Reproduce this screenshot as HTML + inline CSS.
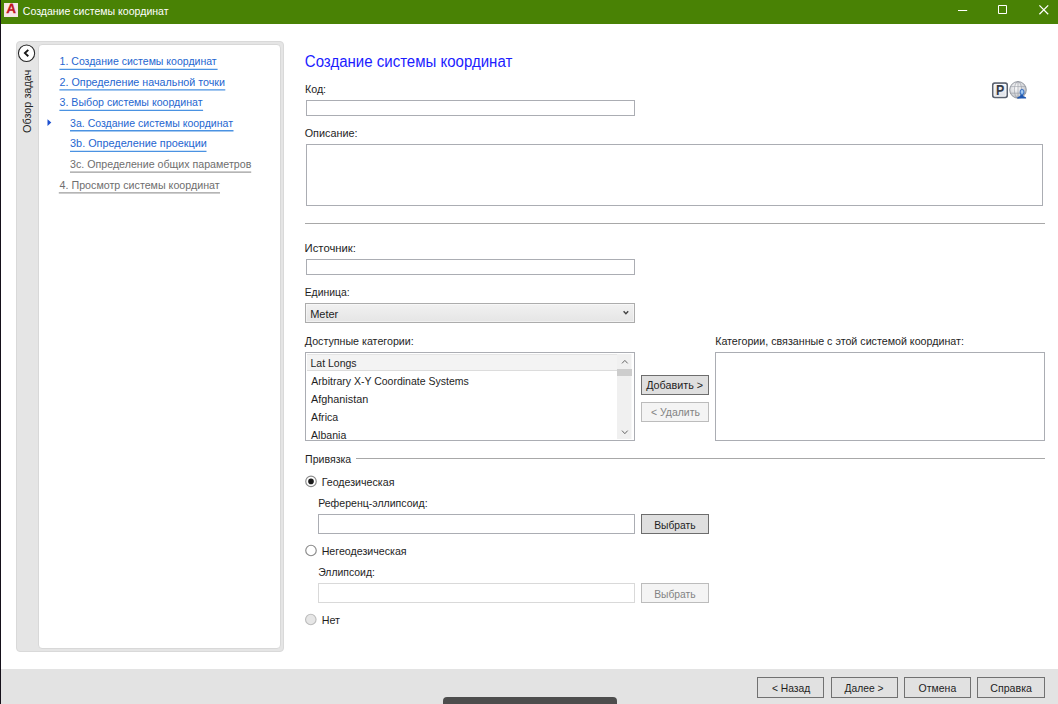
<!DOCTYPE html>
<html lang="ru"><head><meta charset="utf-8"><title>Создание системы координат</title>
<style>
html,body{margin:0;padding:0}
body{width:1058px;height:704px;overflow:hidden;background:#fff;position:relative;font-family:"Liberation Sans",sans-serif;font-size:11.5px;line-height:16px;color:#1e1e1e}
div,span,svg{position:absolute;box-sizing:border-box}
.t{white-space:pre;transform-origin:0 0;display:block}
.tb{left:0;top:0;width:1058px;height:24px;background:#498205}
.lb{left:0;top:0;width:1px;height:704px;background:#15101a}
.ft{left:1px;top:669px;width:1057px;height:35px;background:#e3e3e3}
.in{background:#fff;border:1px solid #abadb3}
.dis{border-color:#d9d9d9}
.btn{background:#e1e1e1;border:1px solid #adadad}
.btn.df{border-color:#6d6d6d;background:#dfdfdf}
.btn.off{background:#f4f4f4;border-color:#bcbcbc}
.ln{height:1px;background:#a8a8a8}
.rd{width:11px;height:11px;border-radius:50%;border:1px solid #8e8e8e;background:#fff}
.ub{stroke:#4a92e2;stroke-width:1.4}
.ug{stroke:#9c9c9c;stroke-width:1.25}
</style></head><body>
<div class="tb"></div><div class="lb"></div>
<div style="left:4px;top:3px;width:14px;height:14px;background:#f6e6e6"></div>
<span class="t" style="left:6.9px;top:1px;font-weight:bold;font-size:13.4px;color:#c0151f;-webkit-text-stroke:.3px #c0151f;transform:skewX(-3deg) scaleX(1.0)">A</span>
<svg style="left:950px;top:0" width="108" height="24" viewBox="0 0 108 24" fill="none" stroke="#fff" stroke-width="1">
<path d="M8 10.5h9.2M48.5 5.5h8v8h-8z"/><path d="M89.4 5.4l8.8 8.8M98.2 5.4l-8.8 8.8" stroke-width="1.25"/></svg>

<div style="left:16px;top:41px;width:268px;height:611px;background:#e5e5e5;border:1px solid #d9d9d9;border-radius:4px"></div>
<div style="left:38px;top:44px;width:243px;height:605px;background:#fff;border:1px solid #d8d8d8;border-radius:4px"></div>
<svg style="left:16px;top:42px" width="22" height="22" viewBox="0 0 22 22" fill="none" stroke="#161616"><ellipse cx="10.550" cy="11.200" rx="8.100" ry="8.300" fill="#fff" stroke-width="1.050" stroke="#262626"/><path d="M12.300 7.900L8.900 11.100l3.400 3.200" stroke-width="1.900"/></svg>
<span class="t" style="left:18.8px;top:132.54px;transform:rotate(-90deg) scaleX(0.9446);color:#222">Обзор задач</span>
<svg style="left:0;top:0" width="300" height="210"><line x1="59.4" x2="217.6" y1="69.4" y2="69.4" class="ub"/><line x1="59.4" x2="225.3" y1="89.9" y2="89.9" class="ub"/><line x1="59.4" x2="203.1" y1="110.4" y2="110.4" class="ub"/><line x1="70.0" x2="233.5" y1="130.8" y2="130.8" class="ub"/><line x1="70.0" x2="206.5" y1="151.4" y2="151.4" class="ub"/><line x1="70.0" x2="251.2" y1="172.0" y2="172.0" class="ug"/><line x1="58.8" x2="220" y1="192.9" y2="192.9" class="ug"/><path d="M47.5 119.3l3.8 3.3l-3.8 3.3z" fill="#1c4fd0"/></svg>

<div class="in" style="left:306px;top:100px;width:329px;height:16px"></div>
<div class="in" style="left:306px;top:144px;width:737px;height:62px"></div>
<div class="ln" style="left:305px;top:223px;width:740px"></div>
<div class="in" style="left:306px;top:259px;width:329px;height:16px"></div>
<div style="left:305px;top:303px;width:330px;height:20px;border:1px solid #acacac;background:linear-gradient(#f1f1f1,#e5e5e5);box-shadow:inset 0 0 0 1px rgba(255,255,255,.45)"></div>
<svg style="left:620px;top:308px" width="12" height="10" fill="none" stroke="#444" stroke-width="1.4"><path d="M3.6 3.2l2.3 2.6l2.3-2.6"/></svg>
<div class="in" style="left:305px;top:352px;width:330px;height:89px"></div>
<div style="left:307px;top:354px;width:310px;height:17px;background:#f3f3f3;border-top:1px solid #e4e4e4;border-bottom:1px solid #dcdcdc"></div>
<div style="left:617px;top:354px;width:15px;height:85px;background:#f0f0f0;border-right:1px solid #f8f8f8"></div>
<div style="left:617px;top:369px;width:15px;height:7px;background:#cdcdcd"></div>
<svg style="left:617px;top:354px" width="16" height="85" fill="none" stroke="#666" stroke-width="1"><path d="M5 9.4l2.85-3l2.85 3M5 76.6l2.85 3.100l2.85-3.100"/></svg>
<div class="btn df" style="left:641px;top:375px;width:68px;height:20px"></div>
<div class="btn off" style="left:641px;top:402px;width:68px;height:20px"></div>
<div class="in" style="left:715px;top:352px;width:330px;height:89px"></div>
<div class="ln" style="left:356px;top:458px;width:689px"></div>

<div class="in" style="left:318px;top:514px;width:317px;height:20px"></div>
<div class="btn df" style="left:641px;top:514px;width:68px;height:20px"></div>
<div class="in dis" style="left:318px;top:583px;width:317px;height:20px"></div>
<div class="btn off" style="left:641px;top:583px;width:68px;height:20px"></div>
<svg style="left:300px;top:470px" width="24" height="160"><g fill="#fff" stroke="#8a8a8a" stroke-width="1.15"><circle cx="11" cy="11.4" r="5.25"/><circle cx="11" cy="80.5" r="5.25"/><circle cx="10.8" cy="149.5" r="5.25" fill="#e6e6e6" stroke="#bdbdbd"/></g><circle cx="11" cy="11.4" r="2.8" fill="#1a1a1a"/></svg>

<svg style="left:990px;top:80px" width="40" height="22" viewBox="0 0 40 22">
<defs><linearGradient id="pg" x1="0" y1="0" x2="0" y2="1"><stop offset="0" stop-color="#f7f8fa"/><stop offset="1" stop-color="#dcdfe6"/></linearGradient>
<radialGradient id="gg" cx=".4" cy=".35" r=".75"><stop offset="0" stop-color="#fbfbfc"/><stop offset=".6" stop-color="#d4d6da"/><stop offset="1" stop-color="#a9acb3"/></radialGradient>
<radialGradient id="hg" cx=".5" cy=".45" r=".6"><stop offset="0" stop-color="#c4dffa"/><stop offset=".55" stop-color="#7db0ea"/><stop offset="1" stop-color="#2f6cc4"/></radialGradient></defs>
<rect x="2.800" y="3.050" width="14.400" height="14.400" rx="1.900" fill="url(#pg)" stroke="#5a616e" stroke-width="1.650"/>
<rect x="4.1" y="4.3" width="11.8" height="11.8" rx="1" fill="none" stroke="#fff" stroke-width=".8" opacity=".8"/>
<text transform="translate(10.2 15.3) scale(.9 1)" text-anchor="middle" font-family="Liberation Sans,sans-serif" font-weight="bold" font-size="13.8" fill="#353b47">P</text>
<circle cx="28" cy="9.9" r="8.3" fill="url(#gg)" stroke="#8f939b" stroke-width=".9"/>
<g fill="none" stroke="#858a93" stroke-width=".65" opacity=".75"><ellipse cx="28" cy="9.9" rx="3.6" ry="8.3"/><path d="M28 1.6v16.6M20.4 6.6h15.2M20.4 13.2h15.2"/></g>
<path d="M27.300 18.550h8.800v-.7c0-.9-1.300-1.200-2.700-1.650l-.55-1.500h-2.300l-.55 1.500c-1.400.45-2.700.75-2.700 1.650z" fill="#1f57b0"/>
<ellipse cx="32.050" cy="12.100" rx="2.050" ry="2.900" fill="url(#hg)" stroke="#2a62b8" stroke-width=".7"/>
</svg>
<div class="ft"></div>
<div class="btn" style="left:757px;top:677px;width:67px;height:21px;border-color:#717171"></div>
<div class="btn" style="left:831px;top:677px;width:67px;height:21px;border-color:#717171"></div>
<div class="btn" style="left:904px;top:677px;width:67px;height:21px;border-color:#717171"></div>
<div class="btn" style="left:977px;top:677px;width:68px;height:21px;border-color:#717171"></div>
<div style="left:443px;top:697px;width:174px;height:12px;background:#4d4d4d;border-radius:4px"></div>
<span class="t tt" style="left:22px;top:3px;transform:translate(0.78px,0.00px) scaleX(0.9177);color:#fff">Создание системы координат</span>
<span class="t lk" style="left:59px;top:53px;transform:translate(0.58px,0.00px) scaleX(0.9152);color:#2566d0">1. Создание системы координат</span>
<span class="t lk" style="left:59px;top:74px;transform:translate(0.57px,0.00px) scaleX(0.9330);color:#2566d0">2. Определение начальной точки</span>
<span class="t lk" style="left:59px;top:94px;transform:translate(0.58px,0.00px) scaleX(0.9221);color:#2566d0">3. Выбор системы координат</span>
<span class="t lk" style="left:70px;top:115px;transform:translate(0.09px,0.00px) scaleX(0.9147);color:#2566d0">3a. Создание системы координат</span>
<span class="t lk" style="left:70px;top:135px;transform:translate(0.06px,0.00px) scaleX(0.9434);color:#2566d0">3b. Определение проекции</span>
<span class="t lg" style="left:70px;top:156px;transform:translate(0.07px,0.00px) scaleX(0.9258);color:#6e6e6e">3c. Определение общих параметров</span>
<span class="t lg" style="left:59px;top:177px;transform:translate(0.60px,0.00px) scaleX(0.9291);color:#6e6e6e">4. Просмотр системы координат</span>
<span class="t h" style="left:304px;top:52px;transform:translate(0.84px,0.00px) scaleX(0.9631);font-size:15.6px;line-height:20px;color:#1c1cff">Создание системы координат</span>
<span class="t " style="left:304px;top:81px;transform:translate(0.92px,0.00px) scaleX(0.9310)">Код:</span>
<span class="t " style="left:304px;top:125px;transform:translate(0.66px,0.00px) scaleX(0.9407)">Описание:</span>
<span class="t " style="left:304px;top:239px;transform:translate(0.62px,0.50px) scaleX(0.9810)">Источник:</span>
<span class="t " style="left:304px;top:284px;transform:translate(0.70px,0.00px) scaleX(0.9021)">Единица:</span>
<span class="t " style="left:310px;top:306px;transform:translate(0.14px,0.00px) scaleX(0.9571)">Meter</span>
<span class="t " style="left:304px;top:332px;transform:translate(0.80px,0.50px) scaleX(0.9282)">Доступные категории:</span>
<span class="t " style="left:310px;top:355px;transform:translate(0.49px,0.00px) scaleX(0.9133)">Lat Longs</span>
<span class="t " style="left:311px;top:373px;transform:translate(0.30px,0.00px) scaleX(0.9134)">Arbitrary X-Y Coordinate Systems</span>
<span class="t " style="left:311px;top:390px;transform:translate(0.10px,0.50px) scaleX(0.9400)">Afghanistan</span>
<span class="t " style="left:311px;top:408px;transform:translate(0.10px,0.90px) scaleX(0.9207)">Africa</span>
<span class="t " style="left:311px;top:426px;transform:translate(0.10px,0.60px) scaleX(0.9158)">Albania</span>
<span class="t " style="left:715px;top:332px;transform:translate(0.17px,0.50px) scaleX(0.9288)">Категории, связанные с этой системой координат:</span>
<span class="t " style="left:646px;top:377px;transform:translate(0.20px,0.25px) scaleX(0.9367)">Добавить &gt;</span>
<span class="t " style="left:650px;top:403px;transform:translate(0.94px,0.50px) scaleX(0.9096);color:#838383">&lt; Удалить</span>
<span class="t " style="left:305px;top:450px;transform:translate(0.08px,0.50px) scaleX(0.9184)">Привязка</span>
<span class="t " style="left:321px;top:474px;transform:translate(0.67px,0.00px) scaleX(0.9260)">Геодезическая</span>
<span class="t " style="left:318px;top:494px;transform:translate(0.18px,0.75px) scaleX(0.9171)">Референц-эллипсоид:</span>
<span class="t " style="left:654px;top:516px;transform:translate(0.20px,0.75px) scaleX(0.8956)">Выбрать</span>
<span class="t " style="left:321px;top:542px;transform:translate(0.67px,0.75px) scaleX(0.9256)">Негеодезическая</span>
<span class="t " style="left:318px;top:563px;transform:translate(0.19px,0.50px) scaleX(0.9066)">Эллипсоид:</span>
<span class="t " style="left:654px;top:585px;transform:translate(0.20px,0.75px) scaleX(0.8956);color:#838383">Выбрать</span>
<span class="t " style="left:321px;top:611px;transform:translate(0.67px,0.75px) scaleX(0.9333)">Нет</span>
<span class="t " style="left:771px;top:680px;transform:translate(0.90px,0.00px) scaleX(0.8952)">&lt; Назад</span>
<span class="t " style="left:844px;top:680px;transform:translate(0.60px,0.00px) scaleX(0.8930)">Далее &gt;</span>
<span class="t " style="left:918px;top:680px;transform:translate(0.59px,0.00px) scaleX(0.9125)">Отмена</span>
<span class="t " style="left:990px;top:680px;transform:translate(0.28px,0.00px) scaleX(0.9227)">Справка</span>
</body></html>
